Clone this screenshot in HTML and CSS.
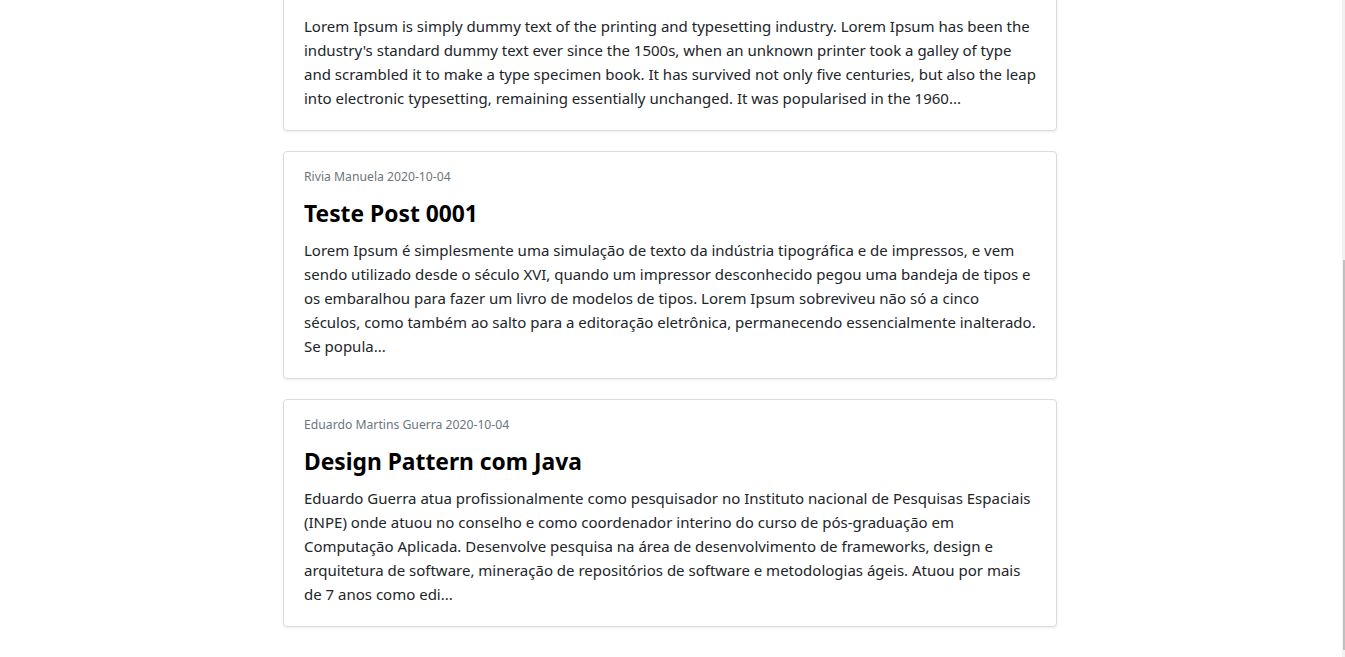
FILE: index.html
```html
<!DOCTYPE html>
<html lang="pt-BR">
<head>
<meta charset="utf-8">
<title>Posts</title>
<link rel="stylesheet" href="styles.css">
</head>
<body>
<main class="feed">
  <article class="card">
    <div class="meta">Admin 2020-10-04</div>
    <h2 class="title">Teste Post 0000</h2>
    <p class="excerpt">Lorem Ipsum is simply dummy text of the printing and typesetting industry. Lorem Ipsum has been the<br>industry's standard dummy text ever since the 1500s, when an unknown printer took a galley of type<br>and scrambled it to make a type specimen book. It has survived not only five centuries, but also the leap<br>into electronic typesetting, remaining essentially unchanged. It was popularised in the 1960...</p>
  </article>
  <article class="card">
    <div class="meta">Rivia Manuela 2020-10-04</div>
    <h2 class="title">Teste Post 0001</h2>
    <p class="excerpt">Lorem Ipsum é simplesmente uma simulação de texto da indústria tipográfica e de impressos, e vem<br>sendo utilizado desde o século XVI, quando um impressor desconhecido pegou uma bandeja de tipos e<br>os embaralhou para fazer um livro de modelos de tipos. Lorem Ipsum sobreviveu não só a cinco<br>séculos, como também ao salto para a editoração eletrônica, permanecendo essencialmente inalterado.<br>Se popula...</p>
  </article>
  <article class="card">
    <div class="meta">Eduardo Martins Guerra 2020-10-04</div>
    <h2 class="title">Design Pattern com Java</h2>
    <p class="excerpt">Eduardo Guerra atua profissionalmente como pesquisador no Instituto nacional de Pesquisas Espaciais<br>(INPE) onde atuou no conselho e como coordenador interino do curso de pós-graduação em<br>Computação Aplicada. Desenvolve pesquisa na área de desenvolvimento de frameworks, design e<br>arquitetura de software, mineração de repositórios de software e metodologias ágeis. Atuou por mais<br>de 7 anos como edi...</p>
  </article>
</main>
<div class="scrollbar"><div class="scrollbar-thumb"></div></div>
</body>
</html>
```

FILE: styles.css
```css
html, body {
  margin: 0;
  padding: 0;
  background: #fff;
}

body {
  font-family: "Noto Sans", "Open Sans", sans-serif;
  color: #212529;
  padding-right: 5px;
  overflow: hidden;
}

.feed {
  width: 774px;
  margin: -73px auto 0;
  display: flex;
  flex-direction: column;
  gap: 20px;
  padding-bottom: 30px;
}

.card {
  border: 1px solid #dcdcdc;
  border-radius: 4px;
  box-shadow: 0 1px 3px rgba(0, 0, 0, 0.08);
  padding: 17px 20px 20px;
  background: #fff;
}

.meta {
  font-size: 12.2px;
  line-height: 16px;
  color: #6c757d;
}

.title {
  margin: 14px 0 10px;
  font-size: 22.8px;
  line-height: 29px;
  font-weight: 700;
  color: #000;
}

.excerpt {
  margin: 0;
  font-size: 15px;
  line-height: 24px;
  white-space: nowrap;
}

.scrollbar {
  position: fixed;
  top: 0;
  right: 0;
  width: 3px;
  height: 100%;
  background: #f1f1f1;
}

.scrollbar-thumb {
  position: absolute;
  top: 260px;
  left: 1px;
  width: 2px;
  height: 390px;
  background: #c1c1c1;
}
```
